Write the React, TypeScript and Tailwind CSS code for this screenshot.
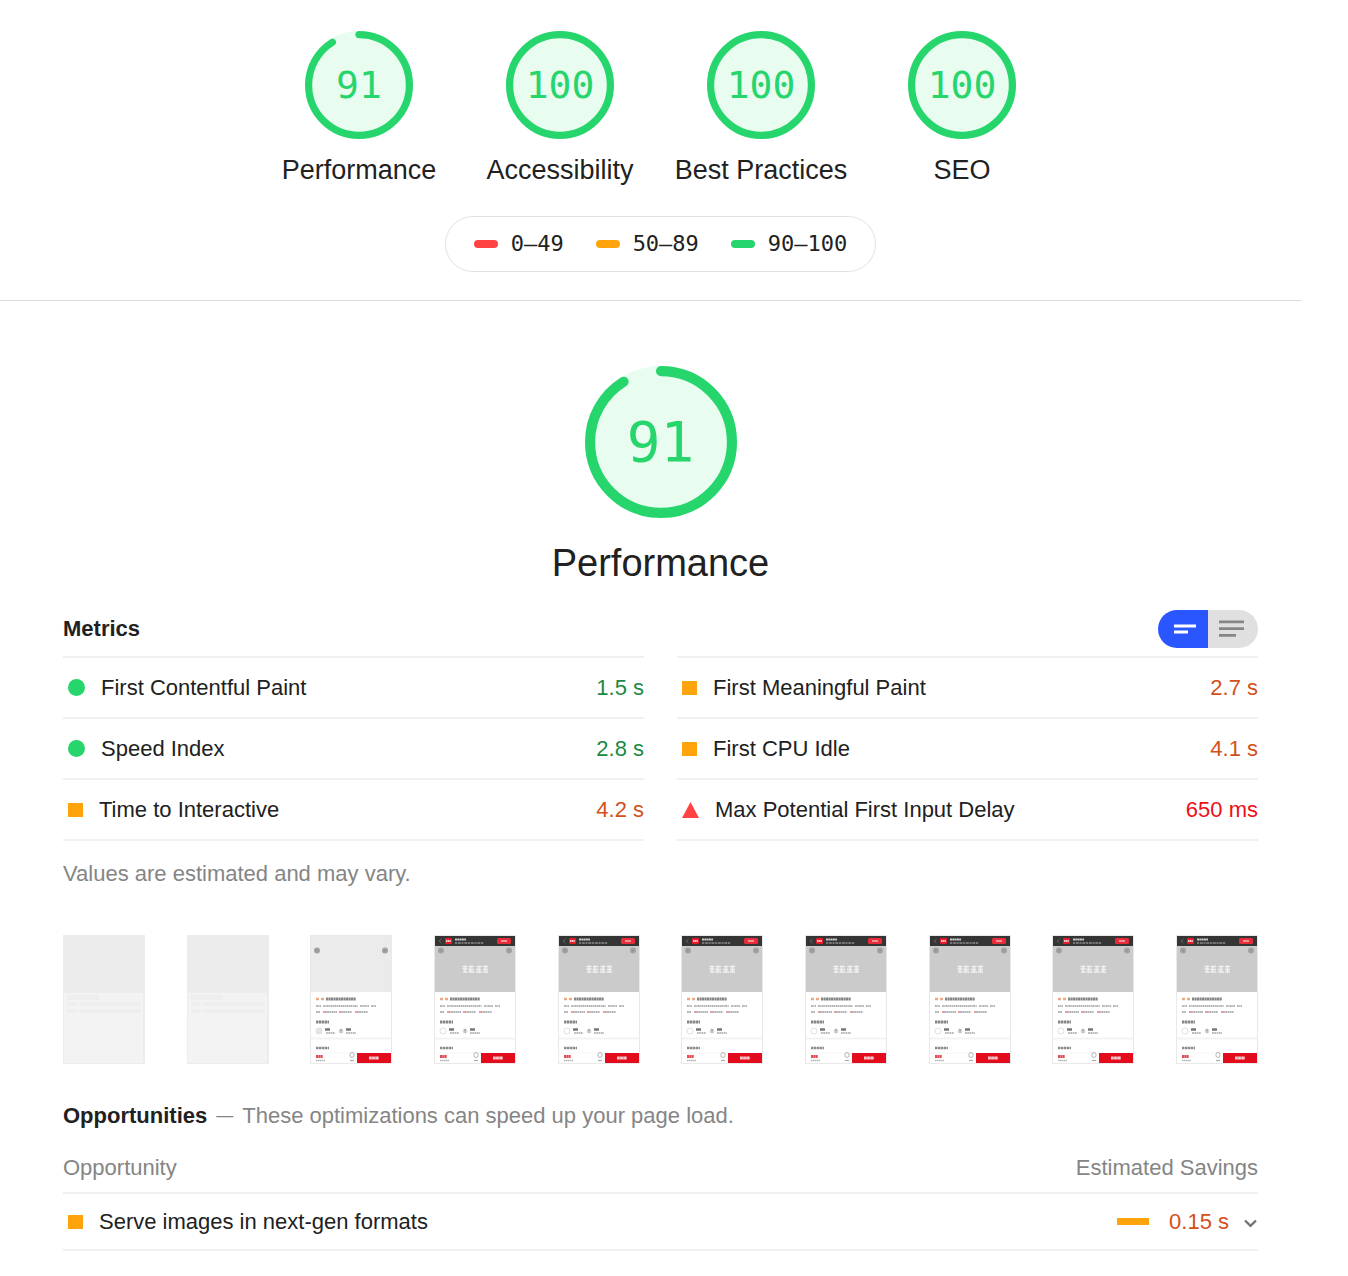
import React, { useState } from 'react';

type Rating = 'pass' | 'average' | 'fail';

interface Metric {
  title: string;
  value: string;
  rating: Rating;
}

interface Category {
  title: string;
  score: number;
}

const CATEGORIES: Category[] = [
  { title: 'Performance', score: 91 },
  { title: 'Accessibility', score: 100 },
  { title: 'Best Practices', score: 100 },
  { title: 'SEO', score: 100 },
];

const SCALE: { range: string; color: string }[] = [
  { range: '0–49', color: 'bg-[#ff4343]' },
  { range: '50–89', color: 'bg-[#ffa40c]' },
  { range: '90–100', color: 'bg-[#26d56c]' },
];

const METRIC_COLUMNS: Metric[][] = [
  [
    { title: 'First Contentful Paint', value: '1.5 s', rating: 'pass' },
    { title: 'Speed Index', value: '2.8 s', rating: 'pass' },
    { title: 'Time to Interactive', value: '4.2 s', rating: 'average' },
  ],
  [
    { title: 'First Meaningful Paint', value: '2.7 s', rating: 'average' },
    { title: 'First CPU Idle', value: '4.1 s', rating: 'average' },
    { title: 'Max Potential First Input Delay', value: '650 ms', rating: 'fail' },
  ],
];

const VALUE_COLORS: Record<Rating, string> = {
  pass: 'text-[#1b8a43]',
  average: 'text-[#d3501a]',
  fail: 'text-[#ee1017]',
};

type FrameState = 'skeleton' | 'content' | 'loaded';

const FRAMES: FrameState[] = [
  'skeleton',
  'skeleton',
  'content',
  'loaded',
  'loaded',
  'loaded',
  'loaded',
  'loaded',
  'loaded',
  'loaded',
];

interface GaugeProps {
  score: number;
  large?: boolean;
}

function Gauge({ score, large = false }: GaugeProps) {
  const circumference = 2 * Math.PI * 56;
  const arc = (score / 100) * circumference;

  return (
    <div className={`relative ${large ? 'size-[152px]' : 'size-[108px]'}`}>
      <svg viewBox="0 0 120 120" className="size-full" fill="none" aria-hidden="true">
        <circle cx="60" cy="60" r="60" fill="#e9fcf0" />
        <circle
          cx="60"
          cy="60"
          r="56"
          stroke="#26d56c"
          strokeWidth="8"
          strokeLinecap="round"
          strokeDasharray={`${arc} ${circumference}`}
          transform="rotate(-90 60 60)"
        />
      </svg>
      <span
        className={`absolute inset-0 flex items-center justify-center font-['DejaVu_Sans_Mono',monospace] leading-none text-[#26d56c] ${
          large ? 'text-[56px]' : 'text-[38px]'
        }`}
      >
        {score}
      </span>
    </div>
  );
}

function RatingIcon({ rating }: { rating: Rating }) {
  if (rating === 'pass') {
    return <span className="ml-[5px] mr-4 size-[17px] shrink-0 rounded-full bg-[#26d56c]" />;
  }
  if (rating === 'average') {
    return <span className="ml-[5px] mr-4 h-[14px] w-[15px] shrink-0 bg-[#ffa40c]" />;
  }
  return (
    <svg viewBox="0 0 17 16" className="ml-[5px] mr-4 h-4 w-[17px] shrink-0" aria-hidden="true">
      <path d="M8.5 0L17 16H0z" fill="#ff4343" />
    </svg>
  );
}

function MetricTable({ metrics }: { metrics: Metric[] }) {
  return (
    <table className="w-full border-t-2 border-[#f0f0f0]">
      <tbody>
        {metrics.map((metric) => (
          <tr key={metric.title} className="h-[61px] border-b-2 border-[#f0f0f0]">
            <th scope="row" className="p-0 text-left font-normal">
              <div className="flex items-center">
                <RatingIcon rating={metric.rating} />
                {metric.title}
              </div>
            </th>
            <td className={`p-0 text-right whitespace-nowrap ${VALUE_COLORS[metric.rating]}`}>{metric.value}</td>
          </tr>
        ))}
      </tbody>
    </table>
  );
}

function ViewToggle() {
  const [expanded, setExpanded] = useState(false);

  return (
    <div className="flex h-[38px] overflow-hidden rounded-full">
      <button
        type="button"
        aria-label="Compact view"
        aria-pressed={!expanded}
        onClick={() => setExpanded(false)}
        className={`flex w-[50px] items-center justify-center ${
          expanded ? 'bg-[#e0e0e0] text-[#868686]' : 'bg-[#2a56ff] text-white'
        }`}
      >
        <svg viewBox="0 0 50 38" className="h-[38px] w-[50px]" fill="currentColor">
          <path d="M16 14.5h22v3H16zM16 20.5h14v3H16z" />
        </svg>
      </button>
      <button
        type="button"
        aria-label="Expanded view"
        aria-pressed={expanded}
        onClick={() => setExpanded(true)}
        className={`flex w-[50px] items-center justify-center ${
          expanded ? 'bg-[#2a56ff] text-white' : 'bg-[#e0e0e0] text-[#868686]'
        }`}
      >
        <svg viewBox="0 0 50 38" className="h-[38px] w-[50px]" fill="currentColor">
          <path d="M11 10.5h25v2.7H11zM11 17.3h25v2.7H11zM11 24h17v2.7H11z" />
        </svg>
      </button>
    </div>
  );
}

function SkeletonFrame() {
  return (
    <>
      <rect width="82" height="129" fill="#ececec" />
      <rect x="1" y="58" width="79" height="70" fill="#f3f3f3" />
      <path d="M4 60h32v5H4zM4 67h10v4H4zM16 67h62v4H16zM4 74h10v4H4zM16 74h62v4H16z" fill="#eeeeee" />
    </>
  );
}

function ProductFrame({ loaded }: { loaded: boolean }) {
  return (
    <>
      <rect width="82" height="129" fill="#e9e9e9" />
      <rect x="1" y="1" width="80" height="127" fill="#fff" />
      <rect x="1" y="1" width="80" height="56" fill={loaded ? '#cbcbcb' : '#ebebeb'} />
      <circle cx="7" cy="15.5" r="3" fill="#a2a2a2" />
      <circle cx="75" cy="15.5" r="3" fill="#a2a2a2" />
      <path d="M7.5 14l-1.500 1.500 1.500 1.500M74 15.500h2" fill="none" stroke="#888" strokeWidth=".7" />
      {loaded && (
        <>
          <rect x="1" y="1" width="80" height="10" fill="#353535" />
          <path d="M7.500 4L5 6l2.500 2" fill="none" stroke="#777" strokeWidth=".7" />
          <rect x="11" y="3" width="7" height="6" rx="1" fill="#e51c2b" />
          <path d="M12 6h5" stroke="#fbc0c4" strokeWidth="2" strokeDasharray="1.400 .3" />
          <path d="M21 4.500h11" stroke="#ccc" strokeWidth="2" strokeDasharray="2 .3" />
          <path d="M21 8h29" stroke="#8c8c8c" strokeWidth="1.500" strokeDasharray="2 .8 3 .7" />
          <rect x="63" y="3" width="14" height="6" rx="1.500" fill="#e72c3a" />
          <path d="M67 6h6" stroke="#f6b8bd" strokeWidth="1.400" />
          {/* placeholder caption in the hero */}
          <path
            d="M28.500 31.500h5M28.500 34h5M29 37h4.500M31 30.500v6M35 31.500h5M34.500 34.500h5.500M34.500 37h6M36.500 31v6M42.500 31.500h5M42 34.500h5M42 37h6M45 31v6M49 31.500h5M49 34.500h5M49 37h5M51.500 30.500v6"
            stroke="#f1f1f1"
            strokeWidth="1.300"
          />
        </>
      )}
      <path d="M6 64h3M11 64h3" stroke="#f0a880" strokeWidth="2.500" />
      <path d="M16 64h30" stroke="#868686" strokeWidth="3" strokeDasharray="2.600 .4 1.600 .3" />
      <path d="M6 71h5M13 71h35M50 71h9M61 71h5" stroke="#b4b4b4" strokeWidth="2.200" strokeDasharray="1.800 .5 1.200 .4" />
      <path d="M6 77h4M15 77h12M31 77h11M47 77h11" stroke="#b4b4b4" strokeWidth="2.200" strokeDasharray="1.800 .4" />
      <path d="M13 77h2M29 77h2M45 77h2" stroke="#ef9c92" strokeWidth="2.200" />
      <path d="M6 87h13" stroke="#868686" strokeWidth="3" strokeDasharray="2.500 .5" />
      <circle cx="9" cy="96" r="3" fill={loaded ? '#fff' : '#e6e6e6'} stroke="#d4d4d4" strokeWidth=".7" />
      <circle cx="31" cy="96" r="2.500" fill="#ddd" />
      <path d="M30 95h2M31 94v4" stroke="#999" strokeWidth=".8" />
      <path d="M15 94.500h5M36 94.500h5" stroke="#777" strokeWidth="2.400" />
      <path d="M16 98h9M36 98h10" stroke="#a4a4a4" strokeWidth="1.600" strokeDasharray="1.800 .5" />
      <rect x="1" y="102.500" width="80" height="2" fill="#f3f3f3" />
      <path d="M6 113h13" stroke="#8c8c8c" strokeWidth="2.600" strokeDasharray="2.500 .5" />
      <path d="M1 118h46" stroke="#f1f1f1" strokeWidth=".7" />
      <path d="M6 121.500h7" stroke="#e24a55" strokeWidth="3" strokeDasharray="2 .3" />
      <path d="M6 125.500h9" stroke="#b6b6b6" strokeWidth="1.500" strokeDasharray="1.500 .4" />
      <path d="M40 119.500a2 2 0 0 1 4 0v2l-2 1-2-1z" fill="none" stroke="#999" strokeWidth=".7" />
      <path d="M40 125.500h4" stroke="#aaa" strokeWidth="1.200" />
      <rect x="47" y="118" width="34" height="10" fill="#e20c1c" />
      <path d="M59 123h10" stroke="#f6cacd" strokeWidth="3" strokeDasharray="2.800 .3" />
    </>
  );
}

function Filmstrip() {
  return (
    <div className="flex justify-between">
      {FRAMES.map((frame, index) => (
        <svg key={index} viewBox="0 0 82 129" className="h-[129px] w-[82px]" role="img" aria-label="Screenshot">
          {frame === 'skeleton' ? <SkeletonFrame /> : <ProductFrame loaded={frame === 'loaded'} />}
        </svg>
      ))}
    </div>
  );
}

export default function App() {
  return (
    <main className="bg-white pr-[46px] font-['Liberation_Sans',Arial,sans-serif] text-[22px] leading-7 text-[#212121]">
      <header className="flex flex-col items-center border-b border-[#dcdcdc] pt-[31px] pr-11 pb-7 pl-[63px]">
        <div className="flex">
          {CATEGORIES.map((category) => (
            <a key={category.title} href="#performance" className="flex w-[201px] flex-col items-center">
              <Gauge score={category.score} />
              <span className="mt-[15px] text-[27px] leading-8 whitespace-nowrap">{category.title}</span>
            </a>
          ))}
        </div>
        <div className="mt-[30px] flex h-14 items-center gap-8 rounded-full border border-[#e2e2e2] px-7 font-['DejaVu_Sans_Mono',monospace]">
          {SCALE.map((item) => (
            <span key={item.range} className="flex items-center gap-[13px]">
              <span className={`h-2 w-6 rounded-full ${item.color}`} />
              {item.range}
            </span>
          ))}
        </div>
      </header>

      <section id="performance" className="pt-[65px] pr-11 pb-6 pl-[63px]">
        <div className="flex flex-col items-center">
          <Gauge score={91} large />
          <h1 className="mt-[23px] text-[38px] leading-[44px]">Performance</h1>
        </div>

        <div className="mt-[25px] flex items-center justify-between">
          <h2 className="font-bold">Metrics</h2>
          <ViewToggle />
        </div>
        <div className="mt-2 grid grid-cols-2 gap-[33px]">
          {METRIC_COLUMNS.map((metrics, index) => (
            <MetricTable key={index} metrics={metrics} />
          ))}
        </div>
        <p className="mt-[19px] mb-[47px] text-[#858585]">Values are estimated and may vary.</p>

        <Filmstrip />

        <div className="mt-[38px] flex gap-[9px]">
          <h2 className="font-bold">Opportunities</h2>
          <p className="flex items-center gap-[9px] text-[#858585]">
            <span className="text-[17px]">—</span>
            These optimizations can speed up your page load.
          </p>
        </div>
        <table className="mt-6 w-full">
          <thead>
            <tr className="border-b-2 border-[#f0f0f0] text-[#858585]">
              <th scope="col" className="p-0 pb-[10px] text-left font-normal">
                Opportunity
              </th>
              <th scope="col" className="p-0 pb-[10px] text-right font-normal">
                Estimated Savings
              </th>
            </tr>
          </thead>
          <tbody>
            <tr className="h-[57px] border-b-2 border-[#f0f0f0]">
              <td className="p-0">
                <div className="flex items-center">
                  <RatingIcon rating="average" />
                  Serve images in next-gen formats
                </div>
              </td>
              <td className="p-0">
                <div className="flex items-center justify-end text-[#d3501a]">
                  <span className="mr-5 h-[7px] w-8 bg-[#ffa40c]" />
                  0.15 s
                  <button type="button" aria-label="Show details" className="ml-[14px] text-[#757575]">
                    <svg viewBox="0 0 15 16" className="h-4 w-[15px]" fill="none" stroke="currentColor">
                      <path d="M2 6.500l5.500 5.300L13 6.500" strokeWidth="2.400" />
                    </svg>
                  </button>
                </div>
              </td>
            </tr>
          </tbody>
        </table>
      </section>
    </main>
  );
}
